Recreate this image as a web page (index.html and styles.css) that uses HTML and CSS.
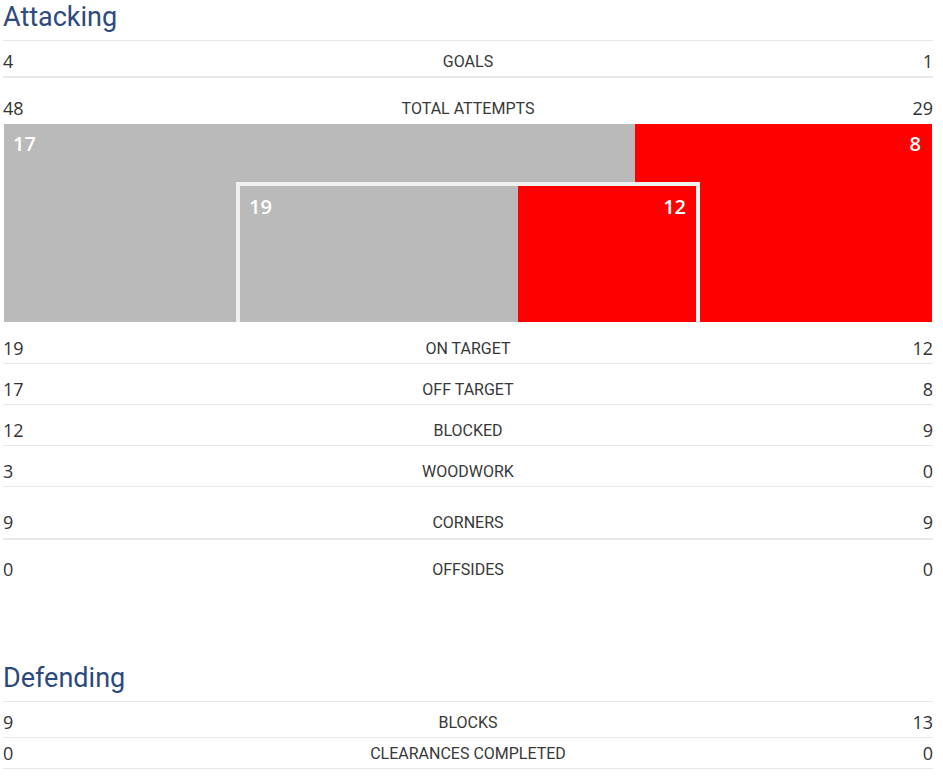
FILE: index.html
```html
<!DOCTYPE html>
<html lang="en">
<head>
<meta charset="utf-8">
<title>Match stats</title>
<link rel="stylesheet" href="styles.css">
</head>
<body>
<div class="page">
  <section class="section section--attacking">
    <h2 class="section-title">Attacking</h2>
    <div class="row row--goals"><span class="num">4</span><span class="label">GOALS</span><span class="num num--right">1</span></div>
    <div class="row row--attempts"><span class="num">48</span><span class="label">TOTAL ATTEMPTS</span><span class="num num--right">29</span></div>
    <div class="shots">
      <div class="shots-outer">
        <div class="seg seg--home" style="width:68%"><span class="seg-val">17</span></div>
        <div class="seg seg--away"><span class="seg-val seg-val--right">8</span></div>
      </div>
      <div class="goal-frame">
        <div class="seg seg--home" style="width:61%"><span class="seg-val">19</span></div>
        <div class="seg seg--away"><span class="seg-val seg-val--right">12</span></div>
      </div>
    </div>
    <div class="row row--first"><span class="num">19</span><span class="label">ON TARGET</span><span class="num num--right">12</span></div>
    <div class="row"><span class="num">17</span><span class="label">OFF TARGET</span><span class="num num--right">8</span></div>
    <div class="row"><span class="num">12</span><span class="label">BLOCKED</span><span class="num num--right">9</span></div>
    <div class="row"><span class="num">3</span><span class="label">WOODWORK</span><span class="num num--right">0</span></div>
    <div class="row row--corners"><span class="num">9</span><span class="label">CORNERS</span><span class="num num--right">9</span></div>
    <div class="row row--offsides"><span class="num">0</span><span class="label">OFFSIDES</span><span class="num num--right">0</span></div>
  </section>
  <section class="section section--defending">
    <h2 class="section-title">Defending</h2>
    <div class="row row--blocks"><span class="num">9</span><span class="label">BLOCKS</span><span class="num num--right">13</span></div>
    <div class="row row--clear"><span class="num">0</span><span class="label">CLEARANCES COMPLETED</span><span class="num num--right">0</span></div>
  </section>
</div>
</body>
</html>
```

FILE: styles.css
```css
* { box-sizing: border-box; }
body {
  margin: 0;
  background: #fff;
  font-family: Roboto, "Liberation Sans", sans-serif;
  color: #333;
}
.page {
  width: 933px;
  padding-left: 3px;
}
.section--attacking { margin-bottom: 78px; }
.section-title {
  margin: 0;
  font-family: Roboto, "Liberation Sans", sans-serif;
  font-weight: 400;
  font-size: 27px;
  line-height: 34px;
  padding-bottom: 6px;
  color: #2c4a7e;
  border-bottom: 1px solid #e8e8e8;
}
.section--defending .section-title {
  line-height: 33px;
}
.row {
  display: grid;
  grid-template-columns: 1fr auto 1fr;
  align-items: center;
  padding: 15px 0 5px;
  border-bottom: 1px solid #e8e8e8;
}
.row--goals { padding: 10px 0 5px; border-bottom: 2px solid #e8e8e8; }
.row--attempts { padding: 20px 0 6px; border-bottom: none; }
.row--first { padding-top: 16px; }
.row--corners { padding: 25px 0 6px; border-bottom: 2px solid #e8e8e8; }
.row--offsides { padding: 19px 0 5px; border-bottom: none; }
.row--blocks { padding: 10px 0 5px; }
.row--clear { padding: 5px 0 5px; }
.num {
  font-family: "Open Sans", "Liberation Sans", sans-serif;
  font-size: 18px;
  line-height: 20px;
  color: #333;
}
.num--right { text-align: right; }
.label {
  font-size: 16px;
  line-height: 20px;
  height: 20px;
  padding-top: 1px;
  color: #383838;
  text-align: center;
}
.shots {
  position: relative;
  height: 198px;
  margin-left: 1px;
  width: 928px;
}
.shots-outer {
  display: flex;
  height: 100%;
}
.seg {
  display: flex;
  align-items: flex-start;
  height: 100%;
}
.seg--home { background: #bababa; }
.seg--away { background: #ff0000; flex: 1; justify-content: flex-end; }
.seg-val {
  font-family: "Open Sans", "Liberation Sans", sans-serif;
  font-weight: 600;
  font-size: 20px;
  line-height: 24px;
  color: #fff;
  padding: 8px 10px 0 9px;
}
.seg-val--right { padding: 8px 11px 0 0; }
.goal-frame {
  position: absolute;
  left: 232px;
  top: 58px;
  width: 464px;
  bottom: 0;
  display: flex;
  border: 4px solid #f1f1f1;
  border-bottom: none;
}
.goal-frame .seg-val { padding: 9px 10px 0 9px; }
.goal-frame .seg-val--right { padding: 9px 10px 0 0; }
```
